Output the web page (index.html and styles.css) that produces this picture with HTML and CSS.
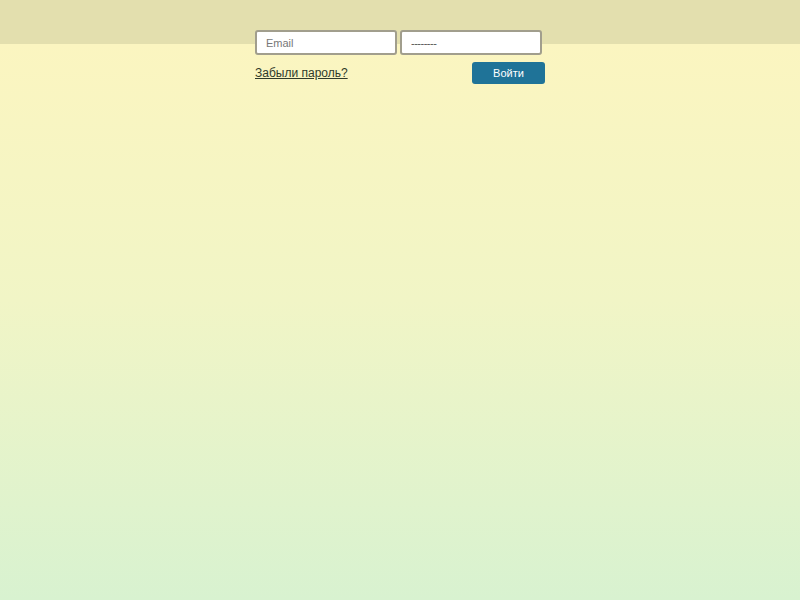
FILE: index.html
```html
<!DOCTYPE html>
<html lang="ru">
<head>
<meta charset="utf-8">
<title>Вход</title>
<link rel="stylesheet" href="styles.css">
</head>
<body>
<div class="page">
  <form class="login">
    <div class="fields">
      <input class="field" type="text" placeholder="Email">
      <input class="field pass" type="text" placeholder="--------">
    </div>
    <div class="actions">
      <a class="forgot" href="#">Забыли пароль?</a>
      <button class="submit" type="button">Войти</button>
    </div>
  </form>
</div>
</body>
</html>
```

FILE: styles.css
```css
html, body {
  margin: 0;
  padding: 0;
  height: 100%;
}
body {
  font-family: "Liberation Sans", Arial, sans-serif;
  background: linear-gradient(to bottom, #e3dfae 0, #e3dfae 44px, #fbf5c0 44px, #f1f5c6 50%, #d8f2d0 100%);
}
.page {
  display: flex;
  justify-content: center;
  padding-top: 30px;
}
.login {
  width: 290px;
  margin: 0;
}
.fields {
  display: flex;
  gap: 3px;
}
.field {
  box-sizing: border-box;
  width: 142px;
  height: 25px;
  border: 2px solid #a19e8d;
  border-radius: 3px;
  background: #fff;
  padding: 0 0 0 9px;
  font-family: "Liberation Sans", Arial, sans-serif;
  font-size: 11px;
  color: #555;
  outline: none;
}
.field::placeholder {
  color: #777;
}
.pass::placeholder {
  color: #555;
  letter-spacing: -0.5px;
}
.actions {
  display: flex;
  justify-content: space-between;
  align-items: flex-start;
  margin-top: 7px;
}
.forgot {
  margin-top: 4px;
  font-size: 12px;
  color: #2f3a2a;
  text-decoration: underline;
}
.submit {
  width: 73px;
  height: 22px;
  border: none;
  border-radius: 3px;
  background: #1f7398;
  color: #fff;
  font-family: "Liberation Sans", Arial, sans-serif;
  font-size: 11px;
  padding: 0;
  cursor: pointer;
}
```
